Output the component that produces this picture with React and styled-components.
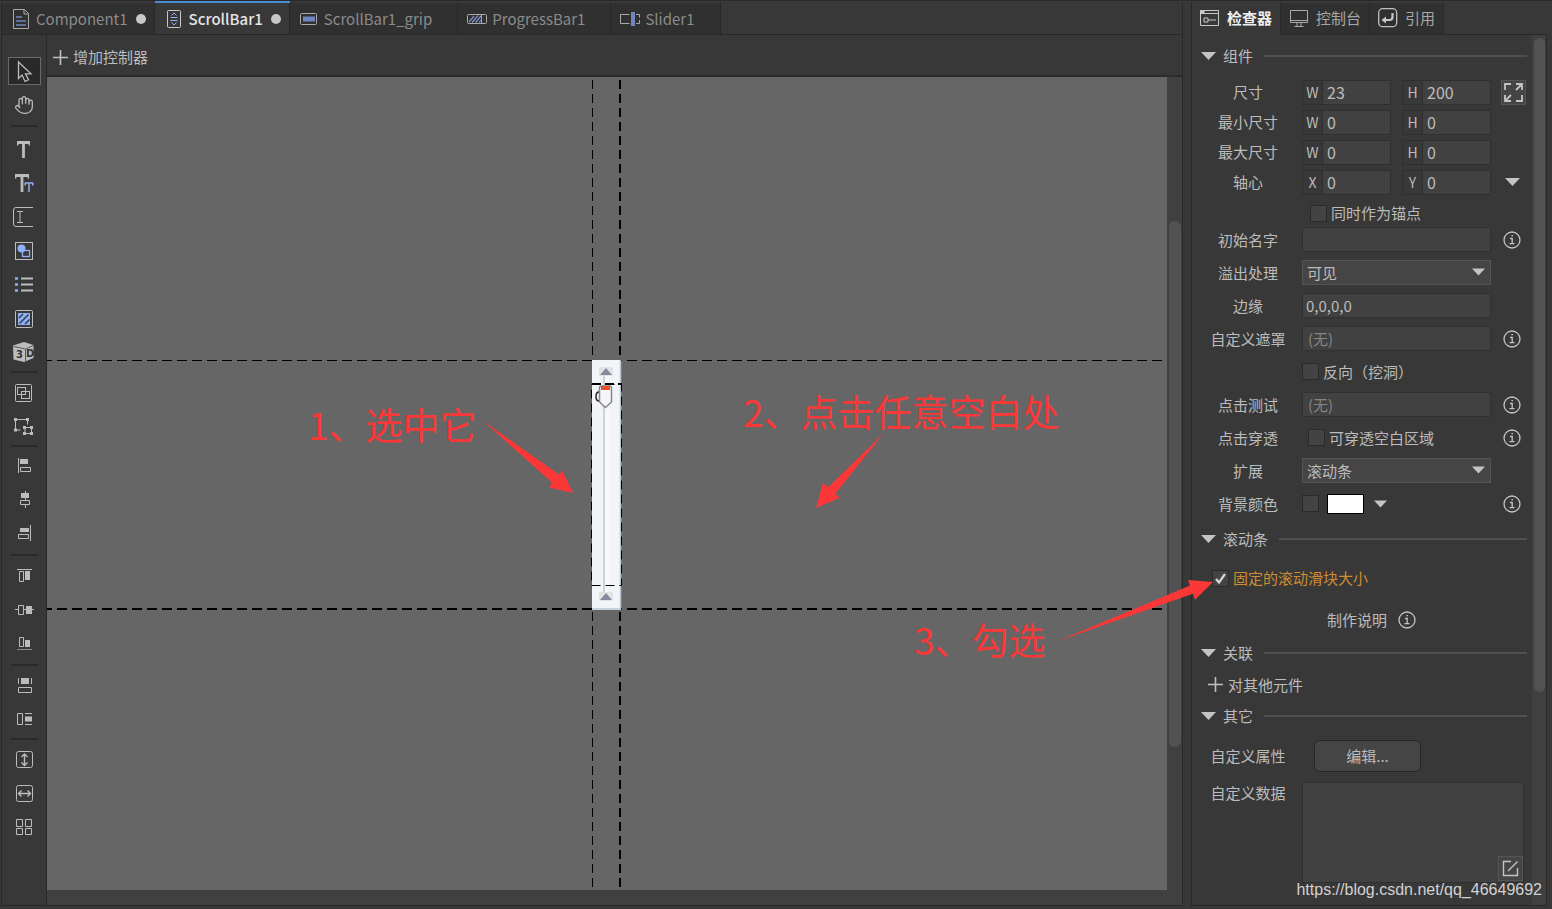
import React from 'react';
import styled, { createGlobalStyle } from 'styled-components';
import { Hand } from 'lucide-react';

const GlobalStyle = createGlobalStyle`
  *{
    box-sizing: border-box;
  }
  body{
    margin: 0;
    background: #383838;
    color: #bcbcbc;
    font-family: "Noto Sans CJK SC", "Noto Sans", sans-serif;
    font-size: 15px;
    line-height: 20px;
  }
  button, input, select, textarea{
    font: inherit;
    color: inherit;
    margin: 0;
  }
`

const Page = styled.div`
  position: relative;
  display: flex;
  gap: 8px;
  min-height: 100vh;
  padding: 2px 5px 3px 1px;
  border-top: 1px solid #2a2a2a;
  overflow: hidden;
`

/* ---------- editor side ---------- */

const Editor = styled.main`
  flex: 1;
  min-width: 0;
  display: flex;
  flex-direction: column;
  border: 1px solid #282828;
  border-top: none;
`

const Tabs = styled.div`
  display: flex;
  height: 32px;
  border-bottom: 1px solid #282828;
`

const Tab = styled.button`
  display: flex;
  align-items: center;
  gap: 5px;
  height: 31px;
  padding: 0 ${props => props.$dirty ? '8px' : '25px'} 0 9px;
  border: none;
  border-right: 1px solid #282828;
  background: ${props => props.$active ? '#383838' : '#303030'};
  box-shadow: ${props => props.$active ? '0 -2px 0 #4a8cd8' : 'none'};
  color: ${props => props.$active ? '#e4e4e4' : '#8b8b8b'};
  font-weight: ${props => props.$active ? 500 : 400};
  white-space: nowrap;
`

const TabIcon = styled.svg`
  width: 20px;
  height: 20px;
  fill: none;
  stroke: #a9a9a9;
`

const Dot = styled.span`
  width: 10px;
  height: 10px;
  margin-left: 3px;
  border-radius: 50%;
  background: #c8c8c8;
`

const Work = styled.div`
  flex: 1;
  display: flex;
`

const Tools = styled.nav`
  display: flex;
  flex-direction: column;
  align-items: center;
  width: 45px;
  padding-top: 19px;
  border-right: 1px solid #282828;
`

const Tool = styled.button`
  display: flex;
  align-items: center;
  justify-content: center;
  width: 33px;
  height: ${props => props.$active ? '28px' : '34px'};
  margin: ${props => props.$active ? '3px 0' : '0'};
  padding: 0;
  border: ${props => props.$active ? '1px solid #6a6a6a' : 'none'};
  background: ${props => props.$active ? '#292929' : 'none'};
  color: #bcbcbc;

  svg{
    flex: none;
  }
`

const ToolSvg = styled.svg`
  width: 32px;
  height: 32px;
  fill: none;
  stroke: #bcbcbc;
`

const Divider = styled.hr`
  width: 27px;
  height: 2px;
  margin: ${props => props.$wide ? '3px 0 4px' : '2px 0'};
  border: none;
  background: #2a2a2a;
`

const Main = styled.div`
  flex: 1;
  min-width: 0;
  display: flex;
  flex-direction: column;
`

const ControllerBar = styled.div`
  display: flex;
  align-items: center;
  height: 42px;
  padding: 4px 6px 0;
  border-bottom: 2px solid #2c2c2c;
`

const PlainButton = styled.button`
  display: flex;
  align-items: center;
  gap: 5px;
  padding: 0;
  border: none;
  background: none;
`

const CanvasArea = styled.div`
  flex: 1;
  display: grid;
  grid-template-columns: 1fr 15px;
  grid-template-rows: 1fr 15px;
`

const Canvas = styled.div`
  position: relative;
  overflow: hidden;
  background: #666;
`

const Track = styled.div`
  padding: ${props => props.$pad || '0'} 1px 0 2px;
  background: #404040;
`

const Thumb = styled.div`
  height: ${props => props.$size};
  border-radius: 6px;
  background: #525252;
`

const HGuide = styled.div`
  position: absolute;
  left: 0;
  right: 4px;
  top: ${props => props.$at};
  height: ${props => props.$weight};
  background: repeating-linear-gradient(90deg, #000 0 5px, transparent 5px 10px, #000 10px 15px);
`

const VGuide = styled.div`
  position: absolute;
  top: 3px;
  bottom: 0;
  left: ${props => props.$at};
  width: ${props => props.$weight};
  background: repeating-linear-gradient(#000 0 9px, transparent 9px 14px);
`

const ScrollBarItem = styled.svg`
  position: absolute;
  left: 543px;
  top: 282px;
  width: 34px;
  height: 254px;
`

/* ---------- inspector side ---------- */

const Inspector = styled.aside`
  display: flex;
  flex-direction: column;
  width: 356px;
`

const PanelTabs = styled.div`
  display: flex;
  height: 32px;
  border-left: 1px solid #282828;
`

const PanelTab = styled.button`
  display: flex;
  align-items: center;
  gap: 7px;
  height: 32px;
  padding: 0 8px 1px;
  border: none;
  border-right: 1px solid #282828;
  border-bottom: 1px solid ${props => props.$active ? '#383838' : '#282828'};
  background: ${props => props.$active ? '#383838' : '#303030'};
  color: ${props => props.$active ? '#f0f0f0' : '#a6a6a6'};
  font-weight: ${props => props.$active ? 700 : 400};
  white-space: nowrap;
`

const PanelEdge = styled.div`
  flex: 1;
  border-bottom: 1px solid #282828;
`

const Panel = styled.div`
  flex: 1;
  display: grid;
  grid-template-columns: 1fr 14px;
  border: 1px solid #282828;
  border-top: none;
`

const PanelBody = styled.div`
  padding: 6px 5px 0 9px;
`

const SectionHead = styled.h2`
  display: flex;
  align-items: center;
  gap: 7px;
  height: 30px;
  margin: ${props => props.$margin || '0'};
  font-size: 15px;
  font-weight: 400;

  &::after{
    content: "";
    flex: 1;
    height: 2px;
    margin-left: 4px;
    background: #505050;
  }
`

const Row = styled.div`
  display: grid;
  grid-template-columns: 94px 189px 28px;
  column-gap: 7px;
  align-items: ${props => props.$align || 'center'};
  height: ${props => props.$height || '33px'};
`

const Label = styled.label`
  text-align: center;
  white-space: nowrap;
`

const Pair = styled.div`
  display: grid;
  grid-template-columns: repeat(2, minmax(0, 1fr));
  column-gap: 11px;
`

const Cell = styled.label`
  display: flex;
  align-items: center;
  min-width: 0;
  height: 25px;
  border: 1px solid #2f2f2f;
  font-size: 14px;

  span{
    flex: none;
    width: 19px;
    text-align: center;
  }
`

const CellInput = styled.input`
  flex: 1;
  min-width: 0;
  width: 100%;
  height: 23px;
  padding: 0 4px;
  border: none;
  border-left: 1px solid #2f2f2f;
  background: #414141;
  font-size: 16px;
`

const TextInput = styled.input`
  width: 100%;
  height: 25px;
  padding: 0 ${props => props.$inset || '3px'};
  border: 1px solid #303030;
  background: #414141;

  &::placeholder{
    color: #858585;
    opacity: 1;
  }
`

const SelectBox = styled.div`
  position: relative;

  svg{
    position: absolute;
    right: 6px;
    top: 8px;
    pointer-events: none;
  }
`

const Select = styled.select`
  display: block;
  appearance: none;
  width: 100%;
  height: 25px;
  padding: 0 4px;
  border: 1px solid #545454;
  border-radius: 0;
  background: #454545;
`

const CheckLabel = styled.label`
  display: flex;
  align-items: center;
  gap: 4px;
  padding-left: ${props => props.$indent || '0'};
  color: ${props => props.$warm ? '#cf8d32' : 'inherit'};
  white-space: nowrap;
`

const CheckWrap = styled.span`
  position: relative;
  display: flex;

  svg{
    position: absolute;
    left: 2px;
    top: 2px;
    pointer-events: none;
  }
`

const CheckInput = styled.input`
  appearance: none;
  width: 17px;
  height: 17px;
  border: 1px solid #2a2a2a;
  background: #434343;
`

const ColorLine = styled.div`
  display: flex;
  align-items: center;
`

const Swatch = styled.button`
  width: 37px;
  height: 20px;
  margin: 0 10px 0 8px;
  padding: 0;
  border: 1px solid #000;
  background: #fff;
`

const IconButton = styled.button`
  display: flex;
  align-items: center;
  justify-content: center;
  justify-self: end;
  width: ${props => props.$boxed ? '25px' : '28px'};
  height: 25px;
  padding: 0;
  border: ${props => props.$boxed ? '1px solid #555' : 'none'};
  background: ${props => props.$boxed ? '#454545' : 'none'};
`

const Note = styled.div`
  display: flex;
  align-items: center;
  gap: 6px;
  height: 36px;
  padding-left: 126px;
`

const CheckLine = styled.div`
  display: flex;
  align-items: center;
  height: 48px;
  padding-left: 11px;
`

const AddLine = styled.div`
  display: flex;
  align-items: center;
  height: 33px;
  padding-left: 7px;
`

const EditButton = styled.button`
  width: 107px;
  height: 32px;
  margin-left: 12px;
  padding: 0;
  border: 1px solid #272727;
  border-radius: 6px;
  background: #454545;
`

const DataRow = styled.div`
  display: grid;
  grid-template-columns: 94px 1fr;
  column-gap: 7px;
  padding-top: 1px;

  label{
    padding-top: 1px;
  }
`

const DataBox = styled.div`
  position: relative;
  margin-right: 3px;

  button{
    position: absolute;
    right: 1px;
    bottom: 2px;
  }
`

const TextArea = styled.textarea`
  display: block;
  width: 100%;
  height: 101px;
  resize: none;
  border: 1px solid #303030;
  background: #414141;
`

/* ---------- notes over the editor ---------- */

const Arrows = styled.svg`
  position: absolute;
  left: 0;
  top: 0;
  width: 100%;
  height: 100%;
  fill: #fc3737;
  pointer-events: none;
`

const Step = styled.span`
  position: absolute;
  left: ${props => props.$left};
  top: ${props => props.$top};
  color: #fc3737;
  font-size: 37px;
  line-height: 40px;
  white-space: nowrap;
  pointer-events: none;
`

const Credit = styled.span`
  position: absolute;
  right: 10px;
  bottom: 9px;
  color: #d2d2d2;
  font-family: "Liberation Sans", Arial, sans-serif;
  font-size: 16px;
`

const blue = '#8fb0f5';

const Caret = ({ size = 15 }) => (
  <svg width={size} height="8" viewBox="0 0 15 8"><path d="M0 0h15L7.5 8z" fill="#c4c4c4"/></svg>
);

const Plus = () => (
  <svg width="15" height="15" viewBox="0 0 15 15"><path d="M7.5 0v15M0 7.5h15" stroke="#c0c0c0" strokeWidth="1.6"/></svg>
);

const Info = ({ label }) => (
  <IconButton aria-label={label}>
    <svg width="18" height="18" viewBox="0 0 18 18" fill="none" stroke="#c4c4c4">
      <circle cx="9" cy="9" r="8" strokeWidth="1.3"/>
      <path d="M7 7.5h2.2v5M6.5 12.7h5M8.4 4.7h1.6" strokeWidth="1.3"/>
    </svg>
  </IconButton>
);

function Check({ checked, ...rest }) {
  return (
    <CheckWrap>
      <CheckInput type="checkbox" defaultChecked={checked} {...rest}/>
      {checked && (
        <svg width="13" height="13" viewBox="0 0 13 13" fill="none">
          <path d="M2 7l3 3.500L11 2" stroke="#d8d8d8" strokeWidth="2.200"/>
        </svg>
      )}
    </CheckWrap>
  );
}

const tabs = [
  {
    name: 'Component1', dirty: true,
    icon: <><path d="M2.5.5h11l4 4v15h-15zM13 .5v4.500h4.500"/><path d="M5 8h6M5 12h10M5 16h10" stroke="#6f86bf" strokeWidth="1.6"/></>,
  },
  {
    name: 'ScrollBar1', dirty: true, active: true,
    icon: <><rect x="3.500" y="1.500" width="13" height="17" rx="1" stroke="#c8c8c8"/><path d="M7.500 6.500L10 4l2.500 2.500M7.500 13.500L10 16l2.500-2.500M6.500 8.500h7M6.500 11.500h7" stroke={blue}/></>,
  },
  {
    name: 'ScrollBar1_grip',
    icon: <><rect x="1.500" y="4.500" width="16" height="11" rx="1"/><path d="M4 7.500h12v5H4z" fill="#6f86bf" stroke="none"/></>,
  },
  {
    name: 'ProgressBar1',
    icon: <><rect x=".5" y="5.500" width="19" height="9" rx="1"/><path d="M14.500 5.500v9"/><path d="M2 13l5-6M5 13.500l6-7M8.500 13.500l5.500-6.500M12 13.500l2-2.500" stroke="#7d92c9" strokeWidth="1.2"/></>,
  },
  {
    name: 'Slider1',
    icon: <><path d="M9.500 5.500h-9v9h9M16 5.500h3.500v3M19.500 11v3.500H16"/><path d="M11 3h4v14h-4z" fill="#6f86bf" stroke="none"/></>,
  },
];

const lit = { fill: '#bcbcbc', stroke: 'none' };

const tools = [
  { name: '选择', active: true, icon: <path d="M10.500 7v16.500l3.500-3.500 3 6.500 3.500-1.700-3-6h5.500z" strokeWidth="1.300"/> },
  { name: '移动' },
  { divider: true, wide: true },
  { name: '文本', icon: <><path d="M9 10.500h13M15.500 10v16" strokeWidth="2.800"/><path d="M9.700 9.500v4M21.300 9.500v4" strokeWidth="1.400"/></> },
  { name: '富文本', icon: <><path d="M7 9.500h14M14 9.500V26" strokeWidth="2.800"/><path d="M7.700 8.500v4M20.300 8.500v4" strokeWidth="1.400"/><path d="M17 17h8M21 17v9M17.200 16.500v3M24.800 16.500v3" stroke={blue} strokeWidth="1.500"/></> },
  { name: '输入框', icon: <><path d="M25 7.500H8q-2.500 0-2.500 2.500v14q0 2.500 2.500 2.500h17"/><path d="M9 11.500h6M12 11.500v11M9 22.500h6"/></> },
  { name: '图形', icon: <><rect x="7.500" y="8.500" width="17" height="17"/><circle cx="13.500" cy="14.500" r="4" fill={blue} stroke="none"/><rect x="14.500" y="16.500" width="7" height="6" stroke={blue} strokeWidth="1.300"/></> },
  { name: '列表', icon: <><path d="M7 10.500h3M7 16.500h3M7 22.500h3" stroke={blue} strokeWidth="2.500"/><path d="M13 10.500h12M13 16.500h12M13 22.500h12" strokeWidth="2"/></> },
  { name: '装载器', icon: <><rect x="7.500" y="8.500" width="17" height="17" rx="1"/><path d="M10 11h12v12H10z" fill={blue} stroke="none"/><path d="M11 16l4-4M11.500 21.500l9-9M17 22l4.500-4.500" stroke="#343c50" strokeWidth="1.500"/></> },
  { name: '三维', icon: <><path d="M5 9.500L16 6l9.500 3v13L16 26 5.500 23.500z" {...lit}/><path d="M5.500 10.500L17.500 13l8-3.500M17.500 13v12.500" stroke="#5b5b5b"/><g fill="#333" stroke="none" fontFamily="DejaVu Sans" fontWeight="700" fontSize="10"><text x="8" y="22">3</text><text x="18" y="21">D</text></g></> },
  { divider: true },
  { name: '组合', icon: <><rect x="7.500" y="8.500" width="16" height="17" rx="1"/><rect x="9.500" y="11.500" width="8" height="7"/><rect x="13.500" y="15.500" width="8" height="7"/></> },
  { name: '取消组合', icon: <><path d="M7.500 9.500h12v5M7.500 9.500v10.500h5M17 17.500h6.500v6H17z"/><path d="M6 8h3v3H6zM18 8h3v3h-3zM6 18.500h3v3H6zM15 16h3v3h-3zM22 16h3v3h-3zM15 22h3v3h-3zM22 22h3v3h-3z" {...lit}/></> },
  { divider: true },
  { name: '左对齐', icon: <><path d="M10.500 8v15"/><path d="M12 9h8v5h-8z" {...lit}/><path d="M12.500 17.500h10v4h-10z"/></> },
  { name: '左右居中', icon: <><path d="M17.500 7v17"/><path d="M13 9h8v5h-8z" {...lit}/><path d="M12.500 16.500h9v4h-9z" fill="#383838"/></> },
  { name: '右对齐', icon: <><path d="M22.500 7v16"/><path d="M12 10h9v4h-9z" {...lit}/><path d="M10.500 16.500h10v4h-10z"/></> },
  { divider: true, wide: true },
  { name: '上对齐', icon: <><path d="M9 8.500h15"/><path d="M11.500 10.500h4v10h-4z"/><path d="M17 10h5v9h-5z" {...lit}/></> },
  { name: '上下居中', icon: <><path d="M7 14.500h19"/><path d="M10.500 10.500h5v9h-5z" fill="#383838"/><path d="M18 11h6v8h-6z" {...lit}/></> },
  { name: '下对齐', icon: <><path d="M9 20.500h15" stroke="#8a8a8a"/><path d="M11.500 8.500h4v9h-4z"/><path d="M17 11h5v7h-5z" {...lit}/></> },
  { divider: true },
  { name: '相同宽度', icon: <><path d="M10.500 9v6M23.500 9v6M10.500 18.500h13v5h-13z"/><path d="M13 9h8v6h-8z" {...lit}/></> },
  { name: '相同高度', icon: <><path d="M9.500 10.500h5v11h-5zM17 10.500h7M17 21.500h7"/><path d="M17 13.500h7v5h-7z" {...lit}/></> },
  { divider: true },
  { name: '垂直拉伸', icon: <><rect x="8.500" y="8.500" width="16" height="16" rx="2"/><path d="M16.500 11.500v10.500M13.500 14l3-3 3 3M13.500 19.500l3 3 3-3" strokeWidth="1.400"/></> },
  { name: '水平拉伸', icon: <><rect x="8.500" y="8.500" width="16" height="16" rx="2"/><path d="M11 16.500h11M13.500 13.500l-3 3 3 3M19.500 13.500l3 3-3 3" strokeWidth="1.400"/></> },
  { name: '表格排列', icon: <path d="M8.500 8.500h6v7h-6zM17.500 8.500h6v7h-6zM8.500 17.500h6v6h-6zM17.500 17.500h6v6h-6z"/> },
];

const sizes = [
  { label: '尺寸', a: ['W', '23'], b: ['H', '200'], expand: true },
  { label: '最小尺寸', a: ['W', '0'], b: ['H', '0'] },
  { label: '最大尺寸', a: ['W', '0'], b: ['H', '0'] },
  { label: '轴心', a: ['X', '0'], b: ['Y', '0'], menu: true },
];

function ToolItem({ item }) {
  if (item.divider) return <Divider $wide={item.wide}/>;
  return (
    <Tool $active={item.active} aria-label={item.name}>
      {item.icon
        ? <ToolSvg viewBox="0 0 32 32">{item.icon}</ToolSvg>
        : <Hand size={20} strokeWidth={1.5}/>}
    </Tool>
  );
}

function ScrollBarDrawing() {
  return (
    <ScrollBarItem viewBox="0 0 34 254">
      <rect x="2" y="1" width="29" height="250" fill="#f2f4f7"/>
      <path d="M30.500 1v250M2 250h29" stroke="#b9c6d3" strokeWidth="1.500"/>
      <path d="M13 17h2v216h-2z" fill="#cfd1db"/>
      <path d="M15 17h4v216h-4z" fill="#f8f8fa"/>
      <path d="M9 8h14v9H9zM9 233h14v9H9z" fill="#e3e3e6"/>
      <path d="M16 9l6 7H10zM16 234l6 7H10z" fill="#868a9e"/>
      <path d="M1.500 25.500h30v201h-30z" fill="none" stroke="#000" strokeDasharray="9 5"/>
      <path d="M2 25h30" stroke="#000" strokeWidth="2" strokeDasharray="9 4"/>
      <path d="M9 33q-3 0-3 4.500T9 42" fill="none" stroke="#222" strokeWidth="1.500"/>
      <path d="M9.500 29q0-2 2-2h8q2 0 2 2v14l-6 5.500-6-5.500z" fill="#f6f6f8" stroke="#85888c" strokeWidth="1.500"/>
      <path d="M11 27h9v4h-9z" fill="#e8502a"/>
    </ScrollBarItem>
  );
}

function InspectorPanel() {
  return (
    <Inspector>
      <PanelTabs>
        <PanelTab $active>
          <TabIcon viewBox="0 0 20 20">
            <path d="M.5 2.500h18v15H.5zM.5 5.500h18M4 10h4v4H4zM8 12h8" stroke="#c8c8c8"/>
            <path d="M.5 2h4v3h-4z" fill="#c8c8c8" stroke="none"/>
          </TabIcon>
          检查器
        </PanelTab>
        <PanelTab>
          <TabIcon viewBox="0 0 20 20"><path d="M1.500 2.500h17v12h-17zM1.500 12.500h17M8 14.500v4M12 14.500v4M5.500 18.500h9"/></TabIcon>
          控制台
        </PanelTab>
        <PanelTab>
          <TabIcon viewBox="0 0 20 20">
            <rect x=".7" y=".7" width="18" height="18" rx="4" stroke="#c0c0c0" strokeWidth="1.300"/>
            <path d="M14.500 5v4q0 3-3 3H6" stroke="#c8c8c8" strokeWidth="2.200"/>
            <path d="M8 8.500v7L3.500 12z" fill="#c8c8c8" stroke="none"/>
          </TabIcon>
          引用
        </PanelTab>
        <PanelEdge/>
      </PanelTabs>
      <Panel>
        <PanelBody>
          <SectionHead $margin="0 0 6px"><Caret/>组件</SectionHead>
          {sizes.map((s, i) => (
            <Row key={s.label} $height="30px">
              <Label htmlFor={`size${i}`}>{s.label}</Label>
              <Pair>
                <Cell><span>{s.a[0]}</span><CellInput id={`size${i}`} defaultValue={s.a[1]}/></Cell>
                <Cell><span>{s.b[0]}</span><CellInput defaultValue={s.b[1]}/></Cell>
              </Pair>
              {s.expand && (
                <IconButton $boxed aria-label="适应内容">
                  <svg width="19" height="19" viewBox="0 0 19 19" fill="none" stroke="#c4c4c4" strokeWidth="1.800">
                    <path d="M1 7V1h6M12 1h6v6M18 12v6h-6M7 18H1v-6M12 7l5-5M2 17l5-5"/>
                  </svg>
                </IconButton>
              )}
              {s.menu && <IconButton aria-label="轴心预设"><Caret/></IconButton>}
            </Row>
          ))}
          <Row $height="26px" $align="end">
            <span/>
            <CheckLabel $indent="8px"><Check/>同时作为锚点</CheckLabel>
          </Row>
          <Row>
            <Label htmlFor="initName">初始名字</Label>
            <TextInput id="initName"/>
            <Info label="初始名字说明"/>
          </Row>
          <Row>
            <Label htmlFor="overflow">溢出处理</Label>
            <SelectBox>
              <Select id="overflow"><option>可见</option></Select>
              <Caret size={13}/>
            </SelectBox>
          </Row>
          <Row>
            <Label htmlFor="edge">边缘</Label>
            <TextInput id="edge" defaultValue="0,0,0,0"/>
          </Row>
          <Row>
            <Label htmlFor="mask">自定义遮罩</Label>
            <TextInput id="mask" $inset="5px" placeholder="(无)"/>
            <Info label="自定义遮罩说明"/>
          </Row>
          <Row>
            <span/>
            <CheckLabel><Check/>反向（挖洞）</CheckLabel>
          </Row>
          <Row>
            <Label htmlFor="hit">点击测试</Label>
            <TextInput id="hit" $inset="5px" placeholder="(无)"/>
            <Info label="点击测试说明"/>
          </Row>
          <Row>
            <Label as="span">点击穿透</Label>
            <CheckLabel $indent="6px"><Check/>可穿透空白区域</CheckLabel>
            <Info label="点击穿透说明"/>
          </Row>
          <Row>
            <Label htmlFor="extend">扩展</Label>
            <SelectBox>
              <Select id="extend"><option>滚动条</option></Select>
              <Caret size={13}/>
            </SelectBox>
          </Row>
          <Row>
            <Label htmlFor="background">背景颜色</Label>
            <ColorLine>
              <Check id="background"/>
              <Swatch aria-label="选择颜色"/>
              <Caret size={13}/>
            </ColorLine>
            <Info label="背景颜色说明"/>
          </Row>

          <SectionHead $margin="4px 0 0"><Caret/>滚动条</SectionHead>
          <CheckLine>
            <CheckLabel $warm><Check checked/>固定的滚动滑块大小</CheckLabel>
          </CheckLine>
          <Note>制作说明<Info label="制作说明"/></Note>

          <SectionHead><Caret/>关联</SectionHead>
          <AddLine><PlainButton><Plus/>对其他元件</PlainButton></AddLine>

          <SectionHead><Caret/>其它</SectionHead>
          <Row $height="50px">
            <Label as="span">自定义属性</Label>
            <EditButton>编辑...</EditButton>
          </Row>
          <DataRow>
            <Label htmlFor="data">自定义数据</Label>
            <DataBox>
              <TextArea id="data"/>
              <IconButton $boxed aria-label="打开编辑器">
                <svg width="17" height="17" viewBox="0 0 17 17" fill="none" stroke="#c4c4c4" strokeWidth="1.400">
                  <path d="M9 1.500H1.500v14h14V8M6 11L15.500 1.500"/>
                </svg>
              </IconButton>
            </DataBox>
          </DataRow>
        </PanelBody>
        <Track $pad="3px"><Thumb $size="654px"/></Track>
      </Panel>
    </Inspector>
  );
}

function App() {
  return (
    <Page>
      <GlobalStyle/>
      <Editor>
        <Tabs>
          {tabs.map(t => (
            <Tab key={t.name} $active={t.active} $dirty={t.dirty}>
              <TabIcon viewBox="0 0 20 20">{t.icon}</TabIcon>
              {t.name}
              {t.dirty && <Dot/>}
            </Tab>
          ))}
        </Tabs>
        <Work>
          <Tools>
            {tools.map((item, i) => <ToolItem key={i} item={item}/>)}
          </Tools>
          <Main>
            <ControllerBar>
              <PlainButton><Plus/>增加控制器</PlainButton>
            </ControllerBar>
            <CanvasArea>
              <Canvas>
                <VGuide $at="545px" $weight="1px"/>
                <VGuide $at="572px" $weight="2px"/>
                <HGuide $at="283px" $weight="1px"/>
                <HGuide $at="531px" $weight="2px"/>
                <ScrollBarDrawing/>
              </Canvas>
              <Track $pad="144px"><Thumb $size="526px"/></Track>
              <Track/>
              <Track/>
            </CanvasArea>
          </Main>
        </Work>
      </Editor>
      <InspectorPanel/>

      <Arrows>
        <path d="M483 420l76 53.500 3.500-3.500L573 492l-24-5.500 3-5z"/>
        <path d="M884 432l-49 61 5 3.500-24 10.500 7-25 5.500 4z"/>
        <path d="M1058 640l132-55.500-2-5.500 25 2-18 17.700-2-6z"/>
      </Arrows>
      <Step $left="308px" $top="403px">1、选中它</Step>
      <Step $left="743px" $top="390px">2、点击任意空白处</Step>
      <Step $left="914px" $top="618px">3、勾选</Step>
      <Credit>https://blog.csdn.net/qq_46649692</Credit>
    </Page>
  );
}

export default App;
